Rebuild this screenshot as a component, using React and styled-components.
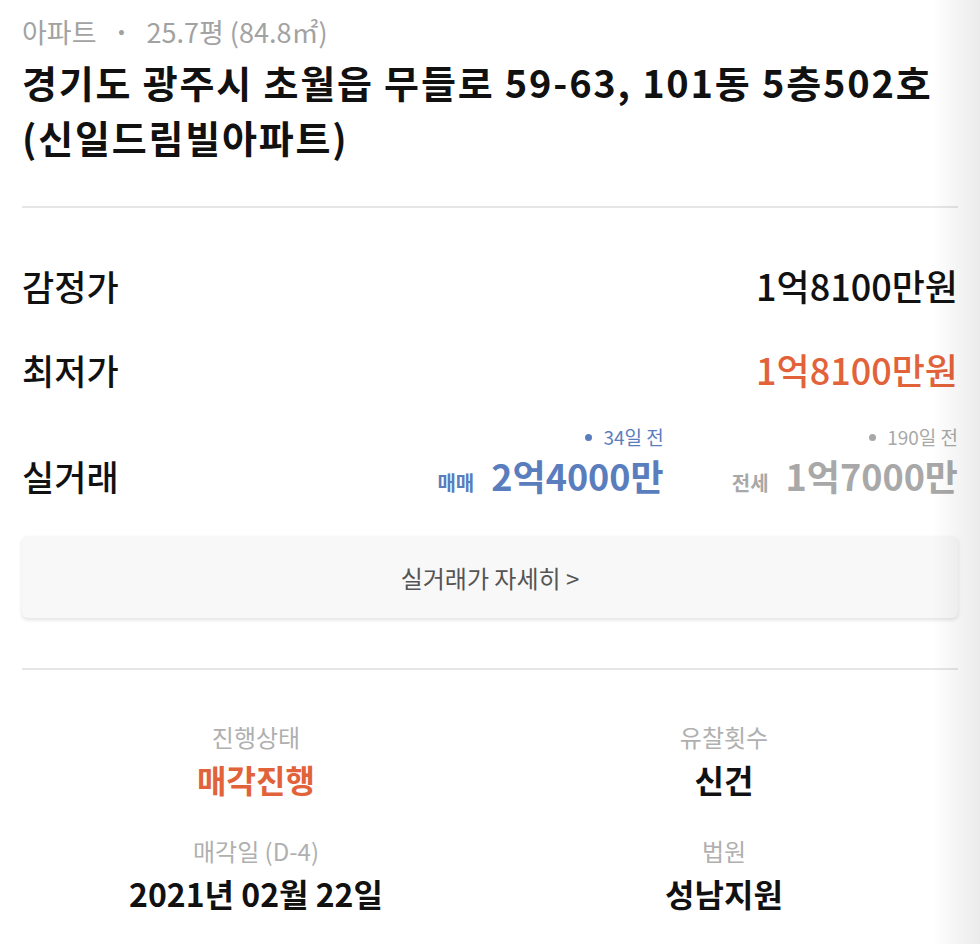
import React from 'react'
import styled, { createGlobalStyle } from 'styled-components'

const GlobalStyle = createGlobalStyle`
  * { box-sizing: border-box; }
  body {
    margin: 0;
    background: #fff;
    font-family: "Noto Sans CJK KR", "Noto Sans", sans-serif;
    color: #111;
  }
`

const trades = [
  { kind: '매매', price: '2억4000만', ago: '34일 전', tone: 'blue' },
  { kind: '전세', price: '1억7000만', ago: '190일 전', tone: 'gray' },
]

const info = [
  { label: '진행상태', value: '매각진행', accent: true },
  { label: '유찰횟수', value: '신건' },
  { label: '매각일 (D-4)', value: '2021년 02월 22일' },
  { label: '법원', value: '성남지원' },
]

const App = () => {
  return (
    <Page>
      <GlobalStyle />
      <Meta>
        아파트<Dot>·</Dot>25.7평 (84.8㎡)
      </Meta>
      <Title>
        경기도 광주시 초월읍 무들로 59-63, 101동 5층502호
        <br />
        (신일드림빌아파트)
      </Title>
      <Divider gap={42} />
      <Prices>
        <PriceRow>
          <RowLabel>감정가</RowLabel>
          <Price>1억8100만원</Price>
        </PriceRow>
        <PriceRow>
          <RowLabel>최저가</RowLabel>
          <Price accent>1억8100만원</Price>
        </PriceRow>
        <TradeRow>
          <RowLabel>실거래</RowLabel>
          <Trades>
            {trades.map((t) => (
              <Trade key={t.kind} tone={t.tone}>
                <Ago>{t.ago}</Ago>
                <TradeLine>
                  <Kind>{t.kind}</Kind>
                  <TradePrice>{t.price}</TradePrice>
                </TradeLine>
              </Trade>
            ))}
          </Trades>
        </TradeRow>
      </Prices>
      <DetailButton>실거래가 자세히 &gt;</DetailButton>
      <Divider gap={50} />
      <InfoGrid>
        {info.map((i) => (
          <InfoCell key={i.label}>
            <InfoLabel>{i.label}</InfoLabel>
            <InfoValue accent={i.accent}>{i.value}</InfoValue>
          </InfoCell>
        ))}
      </InfoGrid>
      <EdgeShade />
    </Page>
  )
}

export default App

const Page = styled.div`
  position: relative;
  width: 980px;
  min-height: 944px;
  padding: 10px 22px 0;
  overflow: hidden;
`

const Meta = styled.div`
  font-size: 27px;
  line-height: 44px;
  color: #a2a2a2;
`

const Dot = styled.span`
  display: inline-block;
  margin: 0 17px;
  font-weight: 700;
`

const Title = styled.h1`
  margin: 0;
  font-size: 38px;
  font-weight: 700;
  line-height: 55px;
  color: #111;
  letter-spacing: 1.8px;
`

const Divider = styled.div`
  height: 2px;
  background: #e6e6e6;
  margin-top: ${(p) => p.gap}px;
`

const Prices = styled.div`
  padding-top: 35px;
`

const PriceRow = styled.div`
  display: flex;
  justify-content: space-between;
  align-items: center;
  height: 84px;
`

const RowLabel = styled.div`
  font-size: 35px;
  font-weight: 500;
  color: #111;
`

const Price = styled.div`
  font-size: 36px;
  font-weight: 500;
  color: ${(p) => (p.accent ? '#e2623a' : '#111')};
`

const TradeRow = styled.div`
  display: flex;
  justify-content: space-between;
  align-items: flex-end;
  height: 94px;
  padding-bottom: 4px;
`

const Trades = styled.div`
  display: flex;
  gap: 68px;
`

const Trade = styled.div`
  display: flex;
  flex-direction: column;
  align-items: flex-end;
  color: ${(p) => (p.tone === 'blue' ? '#5a7dbe' : '#a8a8a8')};
`

const Ago = styled.div`
  font-size: 19px;
  line-height: 24px;
  &::before {
    content: '';
    display: inline-block;
    width: 7px;
    height: 7px;
    border-radius: 50%;
    background: currentColor;
    margin-right: 11px;
    vertical-align: middle;
    position: relative;
    top: -2px;
  }
`

const TradeLine = styled.div`
  display: flex;
  align-items: baseline;
  gap: 17px;
`

const Kind = styled.span`
  font-size: 20px;
  font-weight: 700;
`

const TradePrice = styled.span`
  font-size: 36px;
  font-weight: 700;
  line-height: 52px;
`

const DetailButton = styled.div`
  margin-top: 31px;
  height: 82px;
  display: flex;
  align-items: center;
  justify-content: center;
  background: #f8f8f8;
  border-radius: 6px;
  box-shadow: 0 2px 4px rgba(0, 0, 0, 0.12);
  font-size: 24px;
  color: #555;
`

const InfoGrid = styled.div`
  display: grid;
  grid-template-columns: 1fr 1fr;
  row-gap: 30px;
  padding-top: 48px;
`

const InfoCell = styled.div`
  display: flex;
  flex-direction: column;
  align-items: center;
`

const InfoLabel = styled.div`
  font-size: 24px;
  line-height: 38px;
  color: #b0b0b0;
`

const InfoValue = styled.div`
  font-size: 32px;
  font-weight: 700;
  line-height: 46px;
  color: ${(p) => (p.accent ? '#e2623a' : '#111')};
`

const EdgeShade = styled.div`
  position: absolute;
  top: 0;
  right: 0;
  width: 48px;
  height: 100%;
  pointer-events: none;
  background: linear-gradient(to right, rgba(0, 0, 0, 0), rgba(0, 0, 0, 0.08));
`
